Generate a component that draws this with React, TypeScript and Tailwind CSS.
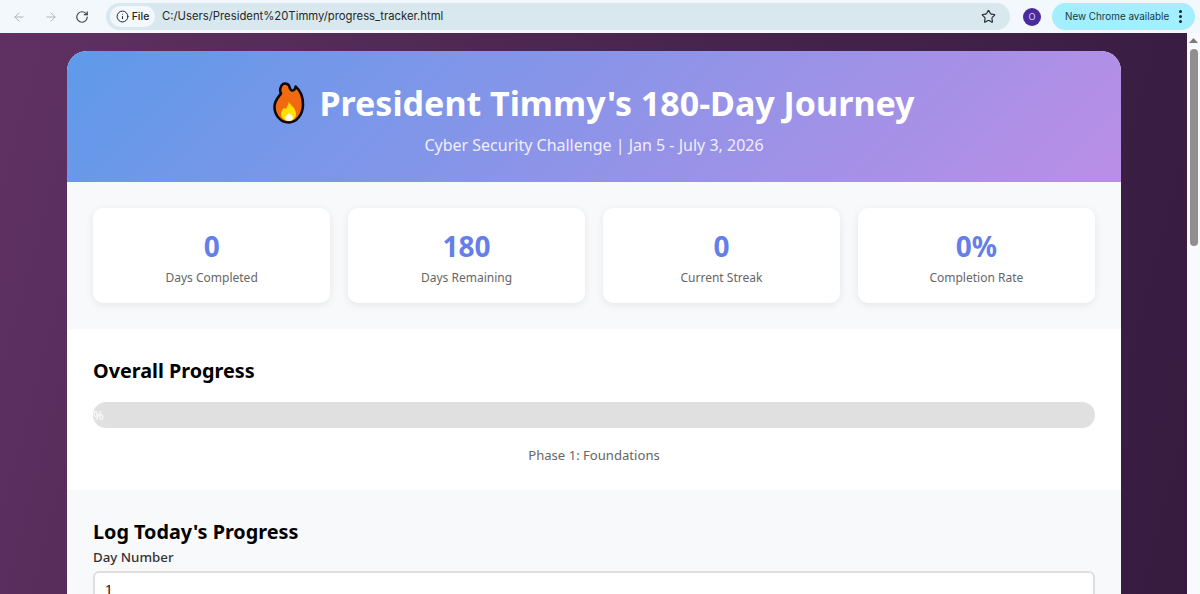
import { ArrowLeft, ArrowRight, RotateCw, Info, Star } from "lucide-react";

const stats = [
  { value: "0", label: "Days Completed" },
  { value: "180", label: "Days Remaining" },
  { value: "0", label: "Current Streak" },
  { value: "0%", label: "Completion Rate" },
];

function Flame() {
  return (
    <svg width="32" height="42" viewBox="0 0 32 42" className="shrink-0">
      <path
        d="M10 2c3-1.200 6 .3 6.500 3 .4 2.500 2.300 4.500 4.500 3 1.500-1 1.600-2.500 1.600-3.500 3.500 3 7.400 9.500 7.400 18 0 10-6.500 18-14.500 18S1.500 33 1.500 25C1.500 18 6 14.500 8 11.500 6.500 9 7 4 10 2z"
        fill="#f26a10"
        stroke="#0b0b0b"
        strokeWidth="2.600"
        strokeLinejoin="round"
      />
      <path d="M16 20c1 3 7 6 7 12 0 4-3 7-7 7s-8-3-8-7c0-3 2-5 3-6 1 1 2 1 2.500 0 .8-1.500 1.500-3 2.500-6z" fill="#ffe000" />
      <path d="M16 31c2 1.500 4 3 4 5 0 2-2 3-4 3s-4-1-4-3c0-2 2.500-3 4-5z" fill="#fff8e0" />
    </svg>
  );
}

export default function App() {
  return (
    <div className="h-[594px] w-[1200px] overflow-hidden flex flex-col font-['Noto_Sans','Open_Sans',sans-serif]">
      {/* Browser toolbar */}
      <div className="h-[33px] shrink-0 bg-[#f2f8fb] flex items-center">
        <div className="flex items-center w-[106px] pl-[12px] text-[#a9b0b4]">
          <ArrowLeft size={14} strokeWidth={1.600} />
          <ArrowRight size={14} strokeWidth={1.600} className="ml-[18px]" />
          <RotateCw size={14} strokeWidth={2} className="ml-[17px] text-[#3f4548]" />
        </div>
        <div className="w-[904px] h-[27px] rounded-full bg-[#d9e8ee] flex items-center pl-[4px]">
          <div className="h-[21px] w-[45px] rounded-full bg-[#f2f8fb] flex items-center justify-center gap-[3px] text-[#1f2326]">
            <Info size={13} strokeWidth={1.800} />
            <span className="text-[10.500px] font-medium font-['Inter',sans-serif]">File</span>
          </div>
          <span className="ml-[7px] text-[11.300px] text-[#24282b] font-['Inter',sans-serif]">C:/Users/President%20Timmy/progress_tracker.html</span>
          <Star size={15} strokeWidth={1.800} className="ml-auto mr-[14px] text-[#24282b]" />
        </div>
        <div className="ml-[13px] w-[18px] h-[18px] rounded-full bg-[#4a2a9c] text-[#d8d2f0] text-[9px] flex items-center justify-center">O</div>
        <div className="ml-[11px] w-[143px] h-[27px] rounded-full bg-[#a3eeff] flex items-center pl-[13px] text-[#1a3a44]">
          <span className="text-[9.850px] font-['Inter',sans-serif]">New Chrome available</span>
          <div className="ml-auto mr-[13px] flex flex-col gap-[2px]">
            <span className="w-[3px] h-[3px] rounded-full bg-[#12262c]" />
            <span className="w-[3px] h-[3px] rounded-full bg-[#12262c]" />
            <span className="w-[3px] h-[3px] rounded-full bg-[#12262c]" />
          </div>
        </div>
      </div>

      {/* Page + scrollbar */}
      <div className="flex flex-1 min-h-0">
        <div className="flex-1 min-w-0 overflow-hidden pt-[18px] pl-[67px] pr-[66px] bg-[linear-gradient(105deg,#5f3162_0%,#4a2650_45%,#361b3f_100%)]">
          <div className="w-[1054px] rounded-t-[20px] overflow-hidden bg-white">
            {/* Header */}
            <div className="h-[131px] bg-[linear-gradient(135deg,#5f9aea_0%,#bb8ee6_100%)] flex flex-col items-center text-white">
              <div className="mt-[26px] flex items-center gap-[14px]">
                <Flame />
                <h1 className="text-[34px] leading-[52px] font-bold">President Timmy's 180-Day Journey</h1>
              </div>
              <p className="mt-[4px] text-[16px] leading-[24px] text-[#f0eefb]">Cyber Security Challenge | Jan 5 - July 3, 2026</p>
            </div>

            {/* Stats */}
            <div className="h-[147px] bg-[#f8f9fa] px-[26px] pt-[26px] grid grid-cols-4 gap-[17.600px]">
              {stats.map((s) => (
                <div key={s.label} className="h-[95px] rounded-[10px] bg-white shadow-[0_2px_8px_rgba(0,0,0,0.08)] flex flex-col items-center pt-[18px]">
                  <div className="text-[28px] leading-[40px] font-bold text-[#667eea]">{s.value}</div>
                  <div className="mt-[3px] text-[12px] leading-[18px] text-[#666]">{s.label}</div>
                </div>
              ))}
            </div>

            {/* Overall progress */}
            <div className="h-[161px] bg-white px-[26px] pt-[26px]">
              <h2 className="text-[19.800px] leading-[32px] font-bold text-black">Overall Progress</h2>
              <div className="mt-[15px] h-[26px] rounded-full bg-[#e0e0e0] flex items-center">
                <span className="text-[13px] leading-[18px] text-white">%</span>
              </div>
              <p className="mt-[17px] text-center text-[13.100px] leading-[20px] text-[#666]">Phase 1: Foundations</p>
            </div>

            {/* Log form */}
            <div className="h-[200px] bg-[#f8f9fa] px-[26px] pt-[26px]">
              <h2 className="text-[19.800px] leading-[32px] font-bold text-black">Log Today's Progress</h2>
              <label className="block text-[13.300px] leading-[18px] font-medium text-[#333]">Day Number</label>
              <div className="mt-[5px] h-[40px] rounded-[6px] border-2 border-[#dedede] bg-white pl-[10px] pt-[7px] text-[14px] leading-[20px] text-[#111] font-['Liberation_Sans',sans-serif]">1</div>
            </div>
          </div>
        </div>

        {/* Scrollbar */}
        <div className="w-[13px] shrink-0 bg-[#f8fafb] flex flex-col items-center">
          <svg width="9" height="5" viewBox="0 0 9 5" className="mt-[5px] text-[#7a7a7a]">
            <path d="M0 5 4.500 0 9 5z" fill="currentColor" />
          </svg>
          <div className="mt-[6px] w-[8px] h-[197px] rounded-full bg-[#8f8f8f]" />
        </div>
      </div>
    </div>
  );
}
